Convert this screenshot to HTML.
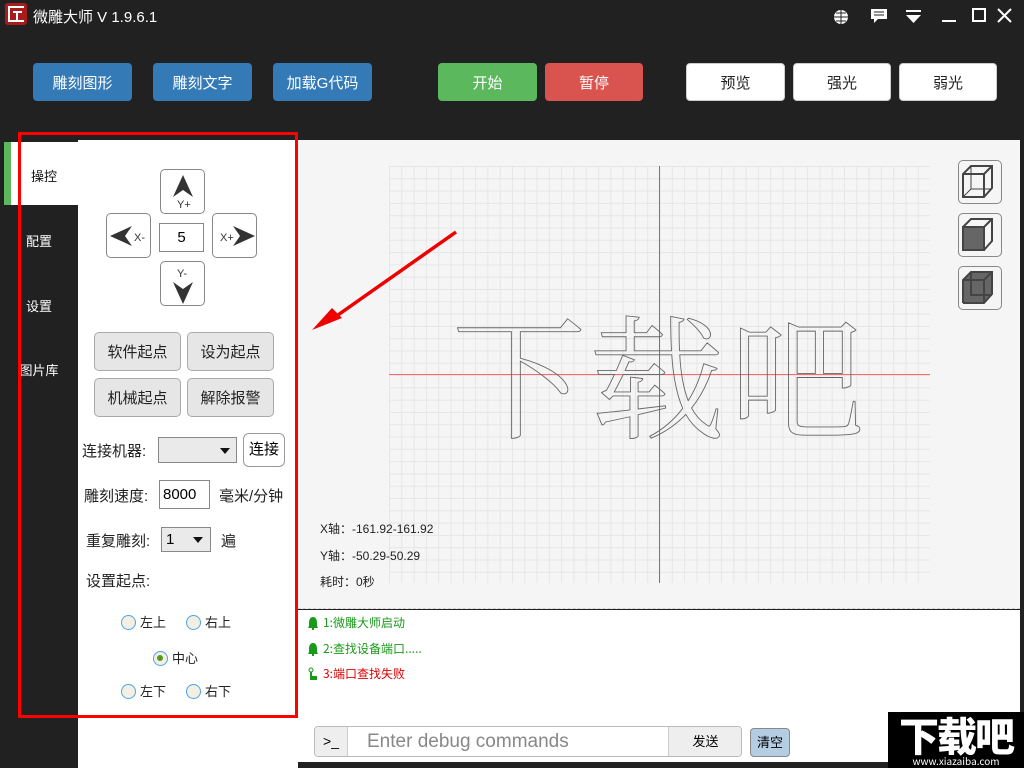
<!DOCTYPE html>
<html><head><meta charset="utf-8"><style>
*{margin:0;padding:0;box-sizing:border-box}
body{width:1024px;height:768px;background:#212121;position:relative;overflow:hidden;font-family:"Liberation Sans","Noto Sans CJK SC",sans-serif}
.a{position:absolute}
.btn{position:absolute;top:63px;height:38px;border-radius:4px;color:#fff;font-size:15px;display:flex;align-items:center;justify-content:center}
.b{background:#337ab7}
.w{background:#fff;color:#222;border:1px solid #ccc}
.g{border:1px solid #888;border-radius:5px;background:#fff;position:absolute}
.gb{position:absolute;background:#e6e6e6;border:1px solid #aaa;border-radius:5px;font-size:15px;color:#222;display:flex;align-items:center;justify-content:center;width:87px;height:39px}
.lbl{position:absolute;font-size:15px;color:#222}
.rad{position:absolute;font-size:13px;color:#222;padding-left:19px;line-height:15px}
.rad:before{content:"";position:absolute;left:0;top:0;width:13px;height:13px;border:1px solid #4aa3f0;border-radius:50%;background:#f3efe2}
.tab{position:absolute;left:0;width:78px;color:#fff;font-size:13px;text-align:center}
.log{position:absolute;left:307px;font-size:12px;font-family:"Noto Sans CJK SC",sans-serif;padding-left:16px}
.log svg{position:absolute;left:0;top:2px}
</style></head><body>
<!-- title -->
<div class="a" style="left:5px;top:3px;width:22px;height:22px;background:#a81c1c;border-radius:3px"><div class="a" style="left:3px;top:3px;width:16px;height:16px;border:2px solid #fff;border-right:none"></div><div class="a" style="left:8px;top:8px;width:9px;height:2px;background:#fff"></div><div class="a" style="left:11px;top:8px;width:2px;height:9px;background:#fff"></div></div>
<div class="a" style="left:33px;top:6px;color:#fff;font-size:15px">微雕大师 V 1.9.6.1</div>
<svg class="a" style="left:830px;top:6px" width="190" height="22">
<circle cx="11" cy="11" r="7" fill="#fff"/><path d="M4 11h14M11 4v14M6 7h10M6 15h10" stroke="#212121" stroke-width="1"/>
<path d="M41 3h16v10h-9l-4 4v-4h-3z" fill="#fff"/><path d="M44 6h10M44 9h10" stroke="#212121"/>
<path d="M76 4h15v2h-15zM76 9h15l-7.5 8z" fill="#fff"/>
<path d="M112 15h14" stroke="#fff" stroke-width="2"/>
<rect x="143" y="3" width="12" height="12" fill="none" stroke="#fff" stroke-width="2"/>
<path d="M168 3l13 13M181 3l-13 13" stroke="#fff" stroke-width="2"/>
</svg>
<!-- toolbar -->
<div class="btn b" style="left:33px;width:99px">雕刻图形</div>
<div class="btn b" style="left:153px;width:99px">雕刻文字</div>
<div class="btn b" style="left:273px;width:99px">加载G代码</div>
<div class="btn" style="left:438px;width:99px;background:#5cb85c">开始</div>
<div class="btn" style="left:545px;width:98px;background:#d9534f">暂停</div>
<div class="btn w" style="left:686px;width:99px">预览</div>
<div class="btn w" style="left:793px;width:98px">强光</div>
<div class="btn w" style="left:899px;width:98px">弱光</div>
<!-- left panel -->
<div class="a" style="left:78px;top:140px;width:220px;height:628px;background:#fff"></div>
<div class="a" style="left:10px;top:142px;width:68px;height:63px;background:#fff"></div>
<div class="a" style="left:4px;top:142px;width:7px;height:63px;background:#5cb85c"></div>
<div class="tab" style="top:166px;left:5px;color:#111">操控</div>
<div class="tab" style="top:231px">配置</div>
<div class="tab" style="top:296px">设置</div>
<div class="tab" style="top:360px">图片库</div>
<!-- jog -->
<div class="g" style="left:160px;top:169px;width:45px;height:45px"><svg width="45" height="45"><path d="M22 5l10 22-10-7-10 7z" fill="#333"/><text x="16" y="38" font-size="11" fill="#333">Y+</text></svg></div>
<div class="g" style="left:160px;top:261px;width:45px;height:45px"><svg width="45" height="45"><text x="16" y="15" font-size="11" fill="#333">Y-</text><path d="M22 42l10-22-10 7-10-7z" fill="#333"/></svg></div>
<div class="g" style="left:106px;top:213px;width:45px;height:45px"><svg width="45" height="45"><path d="M3 22l22-10-7 10 7 10z" fill="#333"/><text x="27" y="27" font-size="11" fill="#333">X-</text></svg></div>
<div class="g" style="left:212px;top:213px;width:45px;height:45px"><svg width="45" height="45"><text x="7" y="27" font-size="11" fill="#333">X+</text><path d="M42 22l-22-10 7 10-7 10z" fill="#333"/></svg></div>
<div class="a" style="left:159px;top:223px;width:45px;height:29px;border:1px solid #888;font-size:15px;text-align:center;line-height:27px">5</div>
<div class="gb" style="left:94px;top:332px">软件起点</div>
<div class="gb" style="left:187px;top:332px">设为起点</div>
<div class="gb" style="left:94px;top:378px">机械起点</div>
<div class="gb" style="left:187px;top:378px">解除报警</div>
<div class="lbl" style="left:82px;top:440px">连接机器:</div>
<div class="a" style="left:158px;top:437px;width:79px;height:26px;border:1px solid #888;background:#eaeaea"><div class="a" style="left:61px;top:10px;border:5px solid transparent;border-top:6px solid #111"></div></div>
<div class="a" style="left:243px;top:433px;width:42px;height:34px;border:1px solid #999;border-radius:6px;font-size:15px;text-align:center;line-height:32px">连接</div>
<div class="lbl" style="left:84px;top:485px">雕刻速度:</div>
<div class="a" style="left:159px;top:480px;width:51px;height:29px;border:1px solid #888;font-size:15px;line-height:27px;padding-left:3px">8000</div>
<div class="lbl" style="left:219px;top:485px">毫米/分钟</div>
<div class="lbl" style="left:86px;top:530px">重复雕刻:</div>
<div class="a" style="left:161px;top:527px;width:50px;height:25px;border:1px solid #888;background:#eaeaea;font-size:15px;padding-left:4px;line-height:23px">1<div class="a" style="left:31px;top:9px;border:5px solid transparent;border-top:6px solid #111"></div></div>
<div class="lbl" style="left:221px;top:530px">遍</div>
<div class="lbl" style="left:86px;top:570px">设置起点:</div>
<div class="rad" style="left:121px;top:615px">左上</div>
<div class="rad" style="left:186px;top:615px">右上</div>
<div class="rad" style="left:153px;top:651px">中心<span class="a" style="left:4px;top:4px;width:6px;height:6px;border-radius:50%;background:#5a9a1a"></span></div>
<div class="rad" style="left:121px;top:684px">左下</div>
<div class="rad" style="left:186px;top:684px">右下</div>
<div class="a" style="left:18px;top:132px;width:280px;height:586px;border:3px solid #f00"></div>
<!-- canvas -->
<div class="a" style="left:298px;top:140px;width:722px;height:469px;background:#f5f5f5;border-bottom:1px dashed #d0d0d0"></div>
<div class="a" style="left:389px;top:166px;width:541px;height:417px;background-image:linear-gradient(#e6e6e6 1px,transparent 1px),linear-gradient(90deg,#e6e6e6 1px,transparent 1px);background-size:12.3px 12.3px"></div>
<div class="a" style="left:659px;top:166px;width:1px;height:417px;background:#777"></div>
<div class="a" style="left:389px;top:374px;width:541px;height:1px;background:#f66"></div>
<svg class="a" style="left:0;top:0" width="1024" height="768">
<g font-family="Noto Serif CJK SC,serif" font-size="134" fill="none" stroke="#666" stroke-width="0.9">
<text x="452" y="428">下</text><text x="590" y="428">载</text><text x="730" y="428">吧</text></g>
<path d="M456 232L328 322" stroke="#e00" stroke-width="3.5"/><path d="M312 330l20-22 10 10z" fill="#e00"/>
</svg>
<div class="a" style="left:320px;top:520px;font-size:12px;color:#222">X轴：-161.92-161.92</div>
<div class="a" style="left:320px;top:547px;font-size:12px;color:#222">Y轴：-50.29-50.29</div>
<div class="a" style="left:320px;top:573px;font-size:12px;color:#222">耗时：0秒</div>
<div class="a" style="left:958px;top:160px;width:44px;height:44px;border:1px solid #888;border-radius:5px"></div>
<div class="a" style="left:958px;top:213px;width:44px;height:44px;border:1px solid #888;border-radius:5px"></div>
<div class="a" style="left:958px;top:266px;width:44px;height:44px;border:1px solid #888;border-radius:5px"></div>
<svg class="a" style="left:958px;top:160px" width="44" height="150" fill="none" stroke="#444" stroke-width="2">
<path d="M5 37V14l8-8h21v22l-8 9zM5 14h21v23M26 14l8-8"/><path d="M13 6v23h21M13 29l-8 8" stroke-width="1"/>
<path d="M5 90h21V67H5z" fill="#666"/><path d="M5 67l8-8h21v22l-8 9M26 67l8-8"/>
<path d="M5 143V120l8-8h21v22l-8 9H5" fill="#666"/><path d="M13 112v23h21M5 120h21v23M26 120l8-8"/>
</svg>
<!-- log -->
<div class="a" style="left:298px;top:610px;width:722px;height:152px;background:#fff"></div>
<div class="log" style="top:614px;color:#1a9a1a"><svg width="12" height="14"><path d="M6 1c-3 0-4 3-4 6v3l-1 2h10l-1-2V7c0-3-1-6-4-6zM5 12h2v2H5z" fill="#1a9a1a"/></svg>1:微雕大师启动</div>
<div class="log" style="top:640px;color:#1a9a1a"><svg width="12" height="14"><path d="M6 1c-3 0-4 3-4 6v3l-1 2h10l-1-2V7c0-3-1-6-4-6zM5 12h2v2H5z" fill="#1a9a1a"/></svg>2:查找设备端口.....</div>
<div class="log" style="top:665px;color:#d00"><svg width="12" height="14"><circle cx="4" cy="3" r="2" fill="none" stroke="#1a9a1a"/><path d="M3 5h2v4h5v4H3z" fill="#1a9a1a"/></svg>3:端口查找失败</div>
<div class="a" style="left:314px;top:726px;width:428px;height:31px;border:1px solid #bbb;border-radius:4px;background:#fff;overflow:hidden">
<div class="a" style="left:0;top:0;width:33px;height:29px;background:#eee;border-right:1px solid #ccc;font-size:14px;line-height:28px;text-align:center">&gt;_</div>
<div class="a" style="left:52px;top:4px;font-size:19px;color:#888">Enter debug commands</div>
<div class="a" style="left:353px;top:0;width:74px;height:29px;background:#eee;border-left:1px solid #ccc;font-size:13px;line-height:29px;text-align:center">发送</div></div>
<div class="a" style="left:750px;top:728px;width:40px;height:29px;border:1px solid #888;border-radius:4px;background:#b5cde3;font-size:13px;line-height:27px;text-align:center">清空</div>
<div class="a" style="left:888px;top:712px;width:136px;height:56px;background:#000;color:#fff;font-family:'Noto Sans CJK SC',sans-serif;font-weight:900;font-size:40px;line-height:44px;text-align:center;letter-spacing:-2px">下载吧<div style="font-size:10px;line-height:10px;font-weight:400;letter-spacing:0">www.xiazaiba.com</div></div>
</body></html>
